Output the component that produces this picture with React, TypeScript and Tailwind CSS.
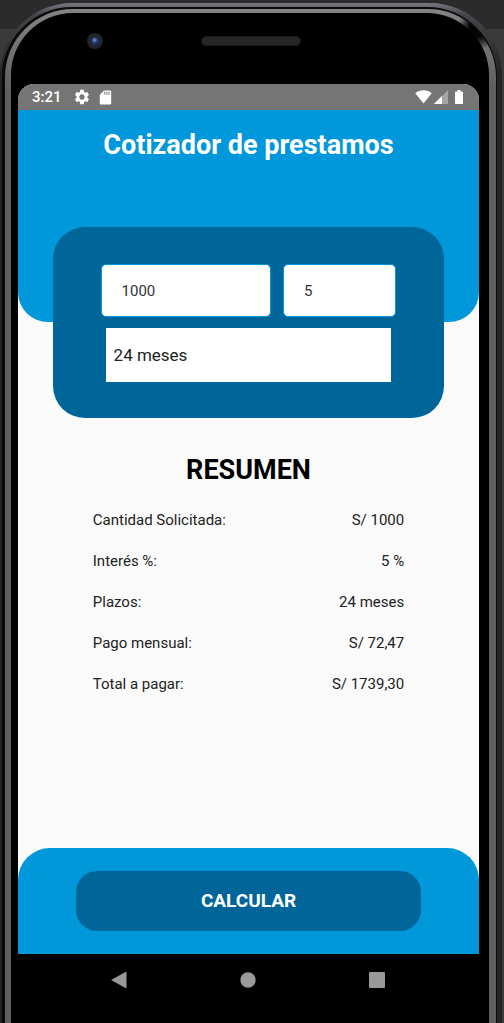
import { useState } from "react";

const terms = [3, 6, 12, 24];

function StatusBar() {
  return (
    <div className="flex h-[26px] items-center bg-[#757575] pl-[14px] pr-4 text-white">
      <span className="text-[15px] font-medium leading-5">3:21</span>
      <svg className="ml-[11px] size-[18px]" viewBox="0 0 24 24" fill="currentColor" aria-hidden="true">
        <path d="M19.14 12.94c.04-.3.06-.61.06-.94 0-.32-.02-.64-.07-.94l2.03-1.58c.18-.14.23-.41.12-.61l-1.92-3.32c-.12-.22-.37-.29-.59-.22l-2.39.96c-.5-.38-1.03-.7-1.62-.94l-.36-2.54c-.04-.24-.24-.41-.48-.41h-3.84c-.24 0-.43.17-.47.41l-.36 2.54c-.59.24-1.13.57-1.62.94l-2.39-.96c-.22-.08-.47 0-.59.22L2.74 8.87c-.12.21-.08.47.12.61l2.03 1.58c-.05.3-.09.63-.09.94s.02.64.07.94l-2.03 1.58c-.18.14-.23.41-.12.61l1.92 3.32c.12.22.37.29.59.22l2.39-.96c.5.38 1.03.7 1.62.94l.36 2.54c.05.24.24.41.48.41h3.84c.24 0 .44-.17.47-.41l.36-2.54c.59-.24 1.13-.56 1.62-.94l2.39.96c.22.08.47 0 .59-.22l1.92-3.32c.12-.22.07-.47-.12-.61l-2.01-1.58zM12 15.6c-1.98 0-3.6-1.62-3.6-3.6s1.62-3.6 3.6-3.6 3.6 1.62 3.6 3.6-1.62 3.6-3.6 3.6z" />
      </svg>
      <svg className="ml-[6px] size-[17px]" viewBox="0 0 24 24" fill="currentColor" aria-hidden="true">
        <path d="M18 2h-8L4.02 8 4 20c0 1.1.9 2 2 2h12c1.1 0 2-.9 2-2V4c0-1.1-.9-2-2-2z" />
        <path d="M10 4h2v4h-2zM13 4h2v4h-2zM16 4h2v4h-2z" fill="#a0a0a0" />
      </svg>
      <svg className="ml-auto h-[14px] w-[17px]" viewBox="0 0 17 14" fill="currentColor" aria-hidden="true">
        <path d="M0.3 3.2C5-.6 12-.6 16.7 3.2L8.5 13.6z" />
      </svg>
      <svg className="ml-[2px] size-[14px]" viewBox="0 0 14 14" fill="currentColor" aria-hidden="true">
        <path d="M14 0v14H0z" opacity="0.35" />
        <path d="M8 6v8H0z" />
      </svg>
      <svg className="ml-[7px] h-[14px] w-[8px]" viewBox="0 0 8 14" fill="currentColor" aria-hidden="true">
        <path d="M2.5 0h3v1.5h1.7q.8 0 .8.8v10.9q0 .8-.8.8H.8q-.8 0-.8-.8V2.300q0-.8.8-.8h1.700z" />
      </svg>
    </div>
  );
}

function NavigationBar() {
  return (
    <nav className="flex h-[51px] items-center justify-around bg-black pl-[36px] pr-[38px] text-[#999]">
      <button type="button" aria-label="Atrás">
        <svg className="size-[18px]" viewBox="0 0 18 18" fill="currentColor">
          <path d="M16.500.5v17L1 9z" />
        </svg>
      </button>
      <button type="button" aria-label="Inicio">
        <svg className="size-[18px]" viewBox="0 0 18 18" fill="currentColor">
          <circle cx="9" cy="9" r="7.700" />
        </svg>
      </button>
      <button type="button" aria-label="Recientes">
        <svg className="size-[18px]" viewBox="0 0 18 18" fill="currentColor">
          <rect x="1" y="1" width="16" height="16" rx="1" />
        </svg>
      </button>
    </nav>
  );
}

export default function App() {
  const [amount, setAmount] = useState("1000");
  const [interest, setInterest] = useState("5");
  const [months, setMonths] = useState("24");
  const [summary, setSummary] = useState({
    amount: "1000",
    interest: "5",
    months: "24",
    monthly: "72,47",
    total: "1739,30",
  });

  const calculate = () => {
    const rate = Number(interest) / 100;
    const n = Number(months);
    const fee = Number(amount) / ((1 - Math.pow(rate + 1, -n)) / rate);
    const format = (value: number) => value.toFixed(2).replace(".", ",");
    setSummary({ amount, interest, months, monthly: format(fee), total: format(fee * n) });
  };

  const rows = [
    ["Cantidad Solicitada:", `S/ ${summary.amount}`],
    ["Interés %:", `${summary.interest} %`],
    ["Plazos:", `${summary.months} meses`],
    ["Pago mensual:", `S/ ${summary.monthly}`],
    ["Total a pagar:", `S/ ${summary.total}`],
  ];

  const field =
    "h-[53px] min-w-0 rounded-[5px] border border-[#0098da] bg-white pl-5 pr-2 text-[15px] text-[#333] outline-none";

  return (
    <div className="flex min-h-screen flex-col bg-[linear-gradient(#2b2b2b_29px,#3a3a3a_29px)] pr-[2px] pt-[3px] font-['Roboto',sans-serif]">
      <div className="flex flex-1 flex-col rounded-t-[72px] bg-[linear-gradient(#77777d_0,#44444a_12px,#242426_70px)] pl-[2px] pr-[5px] pt-1">
        <div className="flex flex-1 flex-col rounded-t-[70px] bg-[#0a0a0b] pl-[3px] pr-px pt-[2px]">
          <div className="flex flex-1 flex-col rounded-t-[68px] bg-[radial-gradient(circle_at_calc(100%_-_16px)_18px,#050505_10px,transparent_22px),linear-gradient(#858585_0,#5f5f61_80px)] pl-[6px] pr-[7px] pt-1">
            <div className="flex flex-1 flex-col rounded-t-[62px] bg-black pb-[18px] pl-[7px] pr-[10px]">
              <div className="grid h-[71px] grid-cols-[1fr_100px_1fr] items-center pb-[15px] pl-[5px]">
                <div className="pl-16">
                  <div className="flex size-4 items-center justify-center rounded-full bg-[#222427]">
                    <div className="size-[9px] rounded-full bg-[radial-gradient(circle_at_40%_35%,#7d93d8_0,#26366f_35%,#10162e_100%)]" />
                  </div>
                </div>
                <div className="h-[10px] rounded-full border border-[#1b1b1b] bg-[#262626]" />
              </div>

              <div className="flex flex-1 flex-col overflow-hidden rounded-t-[16px] bg-[#fafafa]">
                <StatusBar />
                <main className="flex flex-1 flex-col">
                  <header className="h-[212px] rounded-b-[30px] bg-[#0098da] pt-[19px] text-center">
                    <h1 className="text-[27px] font-bold leading-8 text-white">Cotizador de prestamos</h1>
                  </header>

                  <form
                    className="mx-auto -mt-[95px] flex w-[85%] flex-col gap-[11px] rounded-[32px] bg-[#006699] px-12 pb-[36px] pt-[37px]"
                    onSubmit={(event) => event.preventDefault()}
                  >
                    <div className="grid grid-cols-[3fr_2fr] gap-3">
                      <input
                        className={field}
                        aria-label="Cantidad a pedir"
                        inputMode="decimal"
                        value={amount}
                        onChange={(event) => setAmount(event.target.value)}
                      />
                      <input
                        className={field}
                        aria-label="Interés %"
                        inputMode="decimal"
                        value={interest}
                        onChange={(event) => setInterest(event.target.value)}
                      />
                    </div>
                    <select
                      className="mx-[5px] h-[54px] appearance-none bg-white px-2 pt-px text-[17px] text-[#222] outline-none"
                      aria-label="Plazo"
                      value={months}
                      onChange={(event) => setMonths(event.target.value)}
                    >
                      {terms.map((term) => (
                        <option key={term} value={term}>
                          {term} meses
                        </option>
                      ))}
                    </select>
                  </form>

                  <section className="mx-auto flex w-[68%] flex-col pt-[36px]">
                    <h2 className="text-center text-[27px] font-bold leading-8 text-black">RESUMEN</h2>
                    <dl className="flex flex-col gap-[21px] px-px pt-6 text-[15px] leading-5 text-[#222]">
                      {rows.map(([label, value]) => (
                        <div key={label} className="flex justify-between">
                          <dt>{label}</dt>
                          <dd>{value}</dd>
                        </div>
                      ))}
                    </dl>
                  </section>

                  <footer className="mt-auto flex justify-center rounded-t-[32px] bg-[#0098da] py-[23px]">
                    <button
                      type="button"
                      className="h-[60px] w-3/4 rounded-[21px] bg-[#006699] pt-px text-[19px] font-bold text-white"
                      onClick={calculate}
                    >
                      CALCULAR
                    </button>
                  </footer>
                </main>
                <NavigationBar />
              </div>
            </div>
          </div>
        </div>
      </div>
    </div>
  );
}
